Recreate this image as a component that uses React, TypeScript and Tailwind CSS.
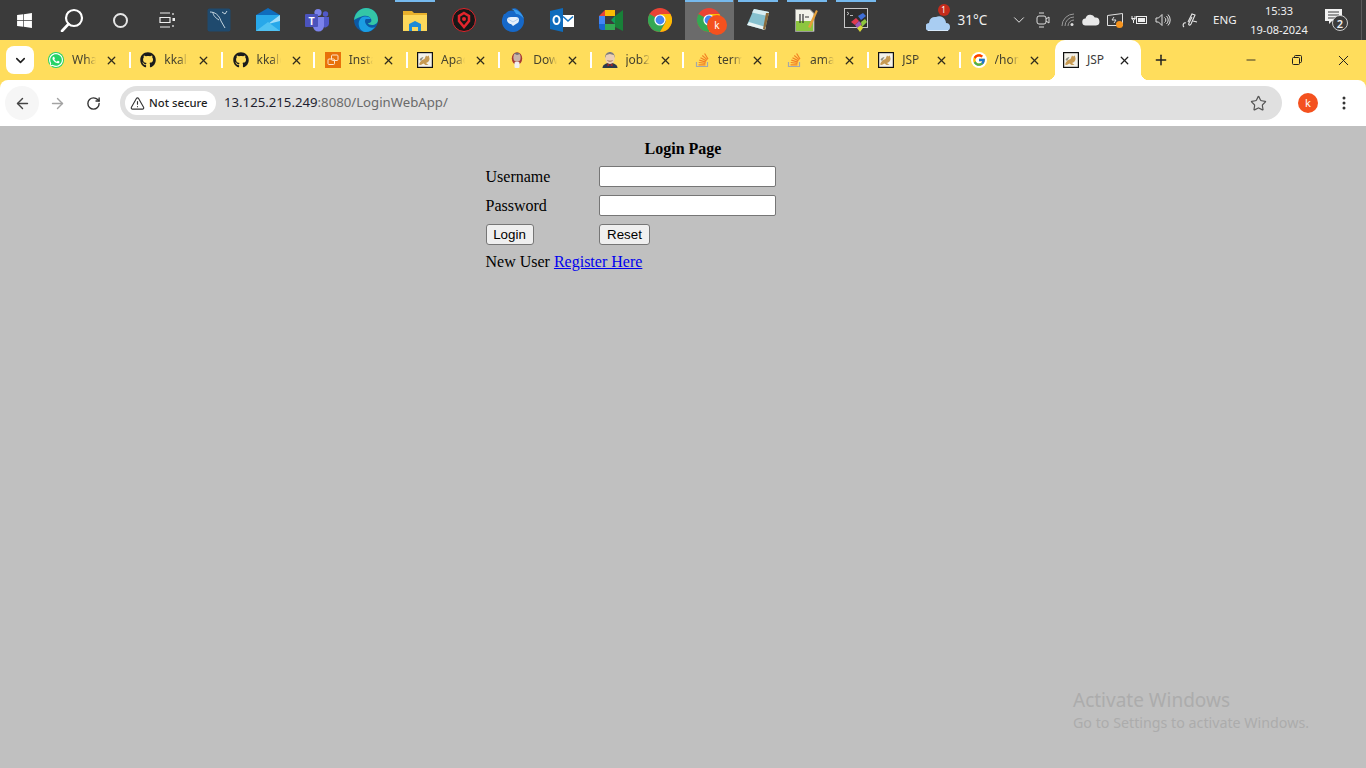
import type { ReactNode } from "react";
import { ArrowLeft, ArrowRight, ChevronDown, Minus, Plus, RotateCw, Star, TriangleAlert, X } from "lucide-react";
import { FaGithub, FaWhatsapp, FaWindows } from "react-icons/fa";
import { FcGoogle } from "react-icons/fc";

const sans = "font-['Noto_Sans',sans-serif]";

function Chrome({ size = 24 }: { size?: number }) {
  return (
    <svg width={size} height={size} viewBox="0 0 24 24">
      <circle cx="12" cy="12" r="12" fill="#ea4335" />
      <path d="M12 12 1.6 6 A12 12 0 0 0 12 24 L18 13.5Z" fill="#34a853" />
      <path d="M12 6h10.4A12 12 0 0 1 12 24l6-10.5Z" fill="#fbbc04" />
      <circle cx="12" cy="12" r="5.6" fill="#fff" />
      <circle cx="12" cy="12" r="4.4" fill="#4285f4" />
    </svg>
  );
}

function Tomcat() {
  return (
    <svg width="16" height="16" viewBox="0 0 16 16">
      <rect x="0.600" y="0.600" width="14.800" height="14.800" fill="#f4f2ea" stroke="#111" strokeWidth="1.200" />
      <path d="M2 12.500c1-3 3-5 5.500-5.500L9 3.500l1.200 1 1.600-1 .8 3.500c-.3 2.500-2 3.500-3.600 4l2.500 2H8.500L6.500 11.500 3.800 13Z" fill="#c79a52" />
      <path d="M2.500 7.500C3.500 6 5 5 6.500 5L4 9Z" fill="#8d8d80" />
    </svg>
  );
}

function JenkinsRed() {
  return (
    <svg width="16" height="16" viewBox="0 0 16 16">
      <ellipse cx="8" cy="6.500" rx="5.200" ry="6.200" fill="#a83a32" />
      <ellipse cx="8" cy="5.500" rx="3.600" ry="4.400" fill="#c9b3a8" />
      <path d="M5 1.500c2-1.200 4.500-1 6 .5L8 3Z" fill="#6f6f78" />
      <rect x="5.500" y="10" width="5" height="6" rx="1" fill="#f1f1f1" />
    </svg>
  );
}

function JenkinsFace() {
  return (
    <svg width="16" height="16" viewBox="0 0 16 16">
      <path d="M0.500 16c0-3 3-5 7.500-5s7.500 2 7.500 5Z" fill="#2b3a4c" />
      <ellipse cx="8" cy="6" rx="4.800" ry="6" fill="#eccfb5" />
      <path d="M3.200 6C2.800 2 5.500 0 8 0s5 2 4.800 6l-1-3-4-1-3.500 1Z" fill="#7e7e7e" />
      <path d="M5.500 8.500c1.500 1 3.500 1 5 0" fill="none" stroke="#8a5a44" strokeWidth="0.800" />
      <path d="M5.500 11.500 8 13l2.500-1.500V14.500L8 13l-2.500 1.500Z" fill="#b32424" />
    </svg>
  );
}

function StackOverflow() {
  return (
    <svg width="16" height="16" viewBox="0 0 16 16" fill="none">
      <path d="M2.500 10v4.500h11V10" stroke="#a5a7aa" strokeWidth="1.200" />
      <path d="M4.500 12.800h7M4.700 10.500l6.800.8M5.300 8.200l6.600 1.900M6.500 5.700l6 3.200M8.300 3.500l5 4.400M10.600 1.500l3.400 5.500" stroke="#f48024" strokeWidth="1.200" />
    </svg>
  );
}

function TrayOneDrive() {
  return (
    <svg width="18" height="12" viewBox="0 0 18 12" fill="#e8e8e8">
      <path d="M4 11.500a3.500 3.500 0 0 1-.5-7 5 5 0 0 1 9.300-1A4 4 0 0 1 14 11.500Z" />
    </svg>
  );
}

function TaskItem({ children, active, open }: { children: ReactNode; active?: boolean; open?: boolean }) {
  return (
    <div className={`relative flex h-10 w-[49px] shrink-0 items-center justify-center ${active ? "bg-[#6b6b6b]" : ""}`}>
      {open && <span className={`absolute top-0 h-[2px] bg-[#76b9ed] ${active ? "left-0 right-px" : "left-[4.500px] right-[4.500px]"}`} />}
      {children}
    </div>
  );
}

function ShellItem({ children }: { children: ReactNode }) {
  return <div className="flex h-10 w-12 shrink-0 items-center justify-center">{children}</div>;
}

function Taskbar() {
  return (
    <div className={`flex h-10 items-center bg-[#3b3b3b] text-[#f0f0f0] ${sans}`}>
      <ShellItem><FaWindows size={17} className="text-white" /></ShellItem>
      <ShellItem>
        <svg width="24" height="24" viewBox="0 0 24 24" fill="none" stroke="#fff" strokeWidth="2.200">
          <circle cx="14" cy="10" r="8" />
          <path d="M8.500 16 2 23" strokeWidth="2.600" strokeLinecap="round" />
        </svg>
      </ShellItem>
      <ShellItem><span className="h-[15px] w-[15px] rounded-full border-[2.500px] border-[#e6e6e6]" /></ShellItem>
      <ShellItem>
        <svg width="18" height="16" viewBox="0 0 18 16" fill="none" stroke="#eee" strokeWidth="1.200">
          <path d="M1 1h10M1 15h10M1 5.500h10v5H1ZM14 1v2M14 13v2" />
          <rect x="13.500" y="6" width="2.500" height="3" fill="#eee" stroke="none" />
        </svg>
      </ShellItem>
      <div className="w-[2.500px] shrink-0" />
      <TaskItem>
        <svg width="24" height="24" viewBox="0 0 24 24">
          <rect width="23" height="23" x="0.500" y="0.500" rx="2" fill="#1f4a6e" />
          <path d="M3 4c5 0 9 3 11 9l4 7M6 4c0 4 3 6 6 8M15 4l3 2 2-3" fill="none" stroke="#c6d6e0" strokeWidth="1" />
        </svg>
      </TaskItem>
      <TaskItem>
        <svg width="24" height="24" viewBox="0 0 24 24">
          <path d="M12 0 24 7v4H0V7Z" fill="#0f6cbd" />
          <rect y="7" width="24" height="16" fill="#28a8ea" />
          <path d="M0 7 12 16 24 7v6L12 16Z" fill="#9fdcf9" />
          <path d="M0 23 12 14l12 9Z" fill="#50c2f2" />
        </svg>
      </TaskItem>
      <TaskItem>
        <svg width="25" height="24" viewBox="0 0 25 24">
          <circle cx="13" cy="4.500" r="3.600" fill="#7b83eb" />
          <circle cx="20.500" cy="6" r="2.700" fill="#5059c9" />
          <path d="M17 9h7v7a4 4 0 0 1-7 2Z" fill="#5059c9" />
          <path d="M8 9h11v9a5.500 5.500 0 0 1-11 0Z" fill="#7b83eb" />
          <rect y="6" width="13" height="13" rx="1" fill="#4b53bc" />
          <text x="6.500" y="16.500" fill="#fff" fontSize="10" fontWeight="700" textAnchor="middle" fontFamily="Liberation Sans">T</text>
        </svg>
      </TaskItem>
      <TaskItem>
        <svg width="24" height="24" viewBox="0 0 24 24">
          <circle cx="12" cy="12" r="12" fill="#0c59a4" />
          <path d="M0 12C1 4 7 0 12 0c7 0 12 5 12 12 0 3-3 5-6 5-2 0-4-1-4-2 3 0 4-2 3-4-1-3-5-4-8-3-4 1-7 3-9 4Z" fill="#34c6a6" />
          <path d="M7 10c3-2 8-2 10 1l-5 0c-2 1-1 6 3 8 2 1 4 1 6 0-2 3-6 5-9 5-3 0-6-2-7-6-1-3 0-6 2-8Z" fill="#1b9de2" />
        </svg>
      </TaskItem>
      <TaskItem open>
        <svg width="24" height="24" viewBox="0 0 24 24">
          <path d="M0 3h9l2 2h13v18H0Z" fill="#e8b02c" />
          <rect y="7" width="24" height="16" fill="#fbd75b" />
          <path d="M6 23v-7l6-3 6 3v7h-3v-4H9v4Z" fill="#1e8ad6" />
        </svg>
      </TaskItem>
      <TaskItem>
        <svg width="24" height="24" viewBox="0 0 24 24">
          <circle cx="12" cy="12" r="11.500" fill="#171717" stroke="#e3252c" strokeWidth="1" />
          <path d="M12 5 17 8v5l-5 6-5-6V8Z" fill="none" stroke="#e3252c" strokeWidth="2.500" />
          <circle cx="12" cy="11" r="2" fill="#e3252c" />
        </svg>
      </TaskItem>
      <TaskItem>
        <svg width="24" height="24" viewBox="0 0 24 24">
          <path d="M3 6C1 10 0 14 2 18c2 4 6 6 10 6 6 0 11-5 11-11 0-5-3-9-7-12-1-1-4-1-6 0 2 0 3 1 3 2-3-1-6 0-8 2l-1 1Z" fill="#1668c8" />
          <path d="M11 1c5 0 10 4 12 10-2-3-5-5-8-5-1-2-2-4-4-5Z" fill="#3a9cec" />
          <path d="M6 12c0-2 2-3 4-3h5c2 0 3 1 3 3s-1 3-3 4l-3 2-2-2c-2 0-4-2-4-4Z" fill="#e6f0fb" />
          <path d="M7 11l5 3 5-3" fill="none" stroke="#a9c9ee" strokeWidth="0.800" />
        </svg>
      </TaskItem>
      <TaskItem>
        <svg width="24" height="24" viewBox="0 0 24 24">
          <rect x="12" y="7" width="12" height="12" fill="#fff" />
          <path d="M13 8.500 18 13 23 8.500" fill="none" stroke="#1173c5" strokeWidth="1.500" />
          <path d="M0 3 13 0v24L0 21Z" fill="#0f6cbd" />
          <ellipse cx="6.500" cy="12" rx="3" ry="4" fill="none" stroke="#fff" strokeWidth="2" />
        </svg>
      </TaskItem>
      <TaskItem>
        <svg width="24" height="24" viewBox="0 0 24 24">
          <path d="M0 8 6 2v6Z" fill="#ea4335" />
          <path d="M6 2h10v6H6Z" fill="#fbbc04" />
          <path d="M0 8h6v8H0Z" fill="#4285f4" />
          <path d="M0 16h6v6H3a3 3 0 0 1-3-3Z" fill="#1967d2" />
          <path d="M6 16h10v6H6Z" fill="#34a853" />
          <path d="M16 5v14l8 4V2l-8 6Z" fill="#188038" />
          <path d="M16 8v8l-4-4Z" fill="#0f9d58" />
        </svg>
      </TaskItem>
      <TaskItem><Chrome /></TaskItem>
      <TaskItem active open>
        <div className="relative">
          <Chrome />
          <span className="absolute left-[10px] top-[7px] flex h-5 w-5 items-center justify-center rounded-full bg-[#f4511e] text-[10px] text-white">k</span>
        </div>
      </TaskItem>
      <TaskItem open>
        <svg width="24" height="24" viewBox="0 0 24 24">
          <path d="M8 1 23 4l-4 18L1 17Z" fill="#86c1cf" />
          <path d="M8 1 23 4l-1 4L6 4.500Z" fill="#d8eef2" />
          <path d="M1 17l18 5 .8-3L3 14Z" fill="#e8f3f3" />
          <path d="M20 5l-3 16 2 1 4-17Z" fill="#8a6a3a" />
        </svg>
      </TaskItem>
      <TaskItem open>
        <svg width="24" height="24" viewBox="0 0 24 24">
          <path d="M0.500 1.500H15l4 4v18H0.500Z" fill="#f3f3ea" stroke="#9a9a9a" />
          <rect x="1" y="13" width="17" height="10" fill="#8dc63f" />
          <path d="M5 6v9M8 6v9M10 9h4" stroke="#333" strokeWidth="1.200" />
          <path d="M13 19 21 2l1.800 1L15.500 20Z" fill="#e5a03a" />
        </svg>
      </TaskItem>
      <TaskItem open>
        <svg width="24" height="24" viewBox="0 0 24 24">
          <rect x="0.500" y="0.500" width="23" height="19" fill="#2e2e2e" stroke="#c8c8c8" />
          <path d="M3 4l2 1.500L3 7M6 7.500h3" stroke="#ddd" fill="none" strokeWidth="0.800" />
          <path d="M14 8l5-3 3 3-5 4Z" fill="#3f6fd8" />
          <path d="M7 14l5-4 3 3-4 4Z" fill="#e03b4f" />
          <path d="M11 17l4-4 3 3-4 5Z" fill="#9b59b6" />
          <path d="M17 14l4-3 2 3-5 5Z" fill="#8ec63f" />
          <path d="M13 20l4-3 2 3-3 4Z" fill="#d6d83a" />
        </svg>
      </TaskItem>

      {/* system tray */}
      <div className="relative ml-auto flex h-10 items-center">
        <div className="relative mr-[8px] h-[24px] w-[24px]">
          <svg width="24" height="24" viewBox="0 0 24 24" className="absolute left-0 top-0">
            <path d="M4 23a4 4 0 0 1-1-8 6 6 0 0 1 7-6 7 7 0 0 1 10 6 4 4 0 0 1 0 8Z" fill="#a9cdf2" />
            <path d="M2 22h20v1H2Z" fill="#d9ebfb" />
          </svg>
          <span className="absolute left-[12px] top-[-4px] flex h-3 w-3 items-center justify-center rounded-full bg-[#c42b1c] text-[8px] text-white">1</span>
        </div>
        <span className="mr-[23px] w-[29px] whitespace-nowrap text-[13.500px]">31°C</span>
        <ChevronDown size={18} strokeWidth={1.300} className="mr-[8px] text-[#e6e6e6]" />
        <svg width="14" height="18" viewBox="0 0 14 18" fill="none" stroke="#ddd" className="mr-[11px]">
          <rect x="1" y="5" width="9" height="8" rx="2" />
          <path d="M10 8l3-2v6l-3-2M3 2h5M3 16h5" />
        </svg>
        <svg width="14" height="14" viewBox="0 0 14 14" fill="none" stroke="#999" className="mr-[7px]">
          <path d="M1 13a12 12 0 0 1 12-12M4 13a9 9 0 0 1 9-9M7 13a6 6 0 0 1 6-6" />
          <circle cx="11" cy="11.500" r="1.500" fill="#ddd" stroke="none" />
        </svg>
        <span className="mr-[7px]"><TrayOneDrive /></span>
        <div className="relative mr-[8px]">
          <svg width="16" height="16" viewBox="0 0 16 16" fill="none" stroke="#e0e0e0" className="block">
            <path d="M0.500 3.500 15.500 1.500v12H0.500Z" />
            <path d="M7 5 5 8h4l-2 3" />
          </svg>
          <span className="absolute left-[9px] top-[9px] h-[7px] w-[7px] rounded-full bg-[#f7941d]" />
        </div>
        <svg width="16" height="12" viewBox="0 0 16 12" fill="none" stroke="#eee" className="mr-[8px]">
          <rect x="5.500" y="2.500" width="10" height="7" />
          <rect x="7" y="4" width="7" height="4" fill="#eee" stroke="none" />
          <path d="M0.500 4.500h4M1 2v2.500a1.500 1.500 0 0 0 3 0V2M2.500 6v3" />
        </svg>
        <svg width="16" height="14" viewBox="0 0 16 14" fill="none" stroke="#e0e0e0" className="mr-[11px]">
          <path d="M1 5h2.500L7 1.500v11L3.500 9H1ZM9.500 4.500a3 3 0 0 1 0 5M11.500 3a5.500 5.500 0 0 1 0 8M13 1.500a8 8 0 0 1 0 11" />
        </svg>
        <svg width="17" height="17" viewBox="0 0 17 17" fill="none" stroke="#e6e6e6" strokeWidth="1.100" className="mr-[14.500px]">
          <path d="M6 10 10 2l3 1-4 9c-1 2-3 1-2-1l3-6M2 15c-2-2 0-5 2-4M11 9l4 1" />
        </svg>
        <span className="mr-[14px] w-[23px] whitespace-nowrap text-[11.500px]">ENG</span>
        <div className="mr-[17px] flex w-[58px] flex-col items-center text-[11px] leading-[19px]">
          <span>15:33</span>
          <span className="whitespace-nowrap">19-08-2024</span>
        </div>
        <div className="relative mr-[17px] h-6 w-[24px]">
          <svg width="18" height="16" viewBox="0 0 18 16" className="absolute left-0 top-[1px]">
            <path d="M0 0h17v12H7l-3 3v-3H0Z" fill="#f2f2f2" />
            <path d="M3 3h11M3 6h11M3 9h7" stroke="#3b3b3b" />
          </svg>
          <span className="absolute left-[7px] top-[7px] flex h-[16px] w-[16px] items-center justify-center rounded-full border border-[#ccc] bg-[#3b3b3b] text-[11px] font-semibold leading-none">2</span>
        </div>
        <span className="absolute right-[4px] top-0 h-10 w-px bg-[#5a5a5a]" />
      </div>
    </div>
  );
}

function Tab({ icon, title, divider = true }: { icon: ReactNode; title: string; divider?: boolean }) {
  return (
    <div className="relative flex h-10 w-[92.250px] shrink-0 items-center pl-[10px]">
      <span className="flex h-4 w-4 shrink-0 items-center justify-center">{icon}</span>
      <span className="ml-[8px] w-[24px] overflow-hidden whitespace-nowrap text-[12px] text-[#45422f] [mask-image:linear-gradient(to_right,black_60%,transparent)]">
        {title}
      </span>
      <X size={13} strokeWidth={2.400} className="ml-[9px] text-[#2f2c1c]" />
      {divider && <span className="absolute right-[-0.500px] top-[12px] h-4 w-[2px] bg-white" />}
    </div>
  );
}

function TabStrip() {
  return (
    <div className={`flex h-10 items-center bg-[#ffdd5c] ${sans}`}>
      <div className="ml-[6px] mr-[4px] flex h-[28px] w-[28px] shrink-0 items-center justify-center rounded-[8px] bg-white">
        <ChevronDown size={15} strokeWidth={2.500} className="text-[#1f1f1f]" />
      </div>
      <Tab icon={<FaWhatsapp size={16} className="rounded-full bg-[#25d366] text-white" />} title="WhatsApp" />
      <Tab icon={<FaGithub size={16} className="text-[#1b1b1b]" />} title="kkaleru" />
      <Tab icon={<FaGithub size={16} className="text-[#1b1b1b]" />} title="kkaleru" />
      <Tab
        icon={
          <svg width="16" height="16" viewBox="0 0 16 16">
            <rect width="16" height="16" fill="#e8710a" />
            <rect x="6.500" y="3" width="6.500" height="5.500" rx="1" fill="none" stroke="#fde3c8" />
            <rect x="3" y="7" width="6.500" height="5.500" rx="1" fill="none" stroke="#fde3c8" />
          </svg>
        }
        title="Instances"
      />
      <Tab icon={<Tomcat />} title="Apache" />
      <Tab icon={<JenkinsRed />} title="Download" />
      <Tab icon={<JenkinsFace />} title="job2" />
      <Tab icon={<StackOverflow />} title="terminal" />
      <Tab icon={<StackOverflow />} title="amazon" />
      <Tab icon={<Tomcat />} title="JSP" />
      <Tab icon={<span className="flex h-4 w-4 items-center justify-center rounded-full bg-white"><FcGoogle size={14} /></span>} title="/home" divider={false} />

      {/* active tab */}
      <div className="relative ml-[2.250px] flex h-10 w-[86px] shrink-0 items-center rounded-t-[10px] bg-white pl-[8px]">
        <span className="absolute -left-2 bottom-0 h-2 w-2 bg-[radial-gradient(circle_at_0_0,transparent_8px,white_8.500px)]" />
        <span className="absolute -right-2 bottom-0 h-2 w-2 bg-[radial-gradient(circle_at_100%_0,transparent_8px,white_8.500px)]" />
        <span className="flex h-4 w-4 shrink-0 items-center justify-center"><Tomcat /></span>
        <span className="ml-[8px] w-[24px] text-[12px] text-[#3c3c3c]">JSP</span>
        <X size={13} strokeWidth={2.400} className="ml-[7px] text-[#1f1f1f]" />
      </div>

      <Plus size={16} strokeWidth={2.200} className="ml-[12px] text-[#1f1f1f]" />

      <div className="ml-auto flex items-center">
        <div className="flex h-10 w-[46px] items-center justify-center"><Minus size={14} strokeWidth={1.500} className="text-[#1f1f1f]" /></div>
        <div className="flex h-10 w-[46px] items-center justify-center">
          <svg width="10" height="10" viewBox="0 0 10 10" fill="none" stroke="#1f1f1f">
            <rect x="0.500" y="2.500" width="7" height="7" rx="1" />
            <path d="M2.500 2.500V1.500a1 1 0 0 1 1-1h5a1 1 0 0 1 1 1v5a1 1 0 0 1-1 1H7.500" />
          </svg>
        </div>
        <div className="flex h-10 w-[46px] items-center justify-center"><X size={17} strokeWidth={1.400} className="text-[#1f1f1f]" /></div>
      </div>
    </div>
  );
}

function Toolbar() {
  return (
    <div className={`flex h-[46px] items-center rounded-tl-[8px] rounded-tr-[8px] bg-white ${sans}`}>
      <div className="ml-[5px] flex h-[34px] w-[34px] items-center justify-center rounded-full bg-[#f6f6f6]">
        <ArrowLeft size={17} strokeWidth={2} className="text-[#444]" />
      </div>
      <ArrowRight size={17} strokeWidth={2} className="ml-[10px] text-[#a3a3a3]" />
      <RotateCw size={15} strokeWidth={2.200} className="ml-[20px] text-[#333]" />
      <div className="ml-[19px] flex h-[34px] flex-1 items-center rounded-full bg-[#e0e0e0] pl-[5px]">
        <div className="flex h-[24px] w-[91px] items-center rounded-full bg-white pl-[5px]">
          <TriangleAlert size={15} strokeWidth={1.800} className="text-[#333]" />
          <span className="ml-[4px] whitespace-nowrap text-[11.300px] font-medium text-[#1f1f1f]">Not secure</span>
        </div>
        <span className="ml-[8px] whitespace-nowrap text-[13.200px] text-[#6a6a6a]">
          <span className="text-[#1f1f2f]">13.125.215.249</span>:8080/LoginWebApp/
        </span>
        <Star size={17} strokeWidth={1.700} className="ml-auto mr-[15px] text-[#555]" />
      </div>
      <span className="ml-[16px] flex h-5 w-5 items-center justify-center rounded-full bg-[#f4511e] text-[11px] text-white">k</span>
      <svg width="4" height="14" viewBox="0 0 4 14" fill="#333" className="ml-[24px] mr-[20px]">
        <circle cx="2" cy="2" r="1.500" />
        <circle cx="2" cy="7" r="1.500" />
        <circle cx="2" cy="12" r="1.500" />
      </svg>
    </div>
  );
}

export default function App() {
  const inputCls = "block h-[21px] w-[177px] rounded-[2px] border border-[#767676] bg-white";
  const buttonCls =
    "block h-[21px] rounded-[3px] border border-[#767676] bg-[#efefef] p-0 font-['Liberation_Sans',sans-serif] text-[13.333px] leading-none text-black";
  const cellCls = "px-[0.500px] py-[3px] align-middle";

  return (
    <div className="flex h-[768px] flex-col overflow-hidden bg-[#ffdd5c]">
      <Taskbar />
      <TabStrip />
      <Toolbar />
      <main className="relative flex-1 bg-[#c0c0c0] pt-[9px] font-['Liberation_Serif',serif] text-[16px] leading-[18px] text-black">
        <table className="mx-auto w-[400px] table-fixed border-separate border-spacing-[2px]">
          <colgroup>
            <col className="w-[111.500px]" />
            <col />
          </colgroup>
          <tbody>
            <tr>
              <td colSpan={2} className={`${cellCls} text-center font-bold`}>Login Page</td>
            </tr>
            <tr>
              <td className={cellCls}>Username</td>
              <td className={cellCls}><input type="text" className={inputCls} /></td>
            </tr>
            <tr>
              <td className={cellCls}>Password</td>
              <td className={cellCls}><input type="password" className={inputCls} /></td>
            </tr>
            <tr>
              <td className={cellCls}><button className={`${buttonCls} w-[48px]`}>Login</button></td>
              <td className={cellCls}><button className={`${buttonCls} w-[51px]`}>Reset</button></td>
            </tr>
            <tr>
              <td colSpan={2} className={cellCls}>
                New User <a href="#register" className="text-[#0000ee] underline">Register Here</a>
              </td>
            </tr>
          </tbody>
        </table>

        {/* Windows activation watermark */}
        <div className={`absolute left-[1073px] top-[561px] text-[#acacac] ${sans}`}>
          <p className="text-[19px] leading-[26px]">Activate Windows</p>
          <p className="text-[14.250px] leading-[20px]">Go to Settings to activate Windows.</p>
        </div>
      </main>
    </div>
  );
}
